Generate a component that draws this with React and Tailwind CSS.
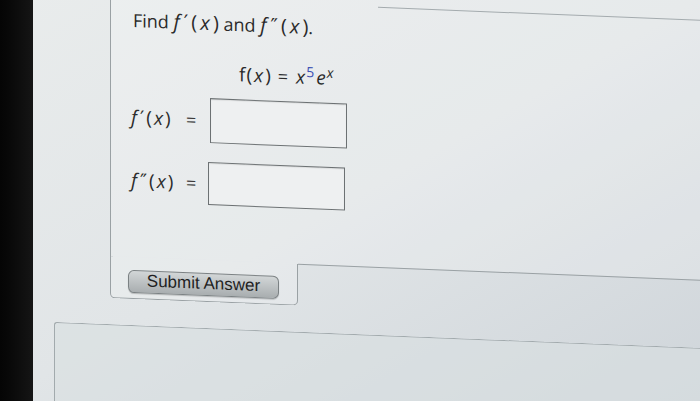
// Derivative question card (photo of a WebAssign-style page)
const sans = { fontFamily: '"Open Sans", "DejaVu Sans", sans-serif' }

// f′(x) / f″(x) typeset loosely, like the math renderer on the page
function Fx({ prime, wide = false }) {
  return (
    <span className={wide ? 'text-[20px]' : 'text-[19px]'}>
      <i>f</i>
      <span className={wide ? 'ml-[4px]' : 'ml-[3px]'} style={{ fontFamily: '"DejaVu Sans", sans-serif' }}>{prime}</span>
      <span className={wide ? 'ml-[3px]' : 'ml-[2px]'}>(</span>
      <i className={wide ? 'mx-[3px]' : 'mx-[2px]'}>x</i>
      <span>)</span>
    </span>
  )
}

function AnswerBox({ className = '' }) {
  return (
    <div className={`w-[137px] border border-[#6c7173] bg-[#eef0f1] shadow-[inset_0_1px_1px_rgba(0,0,0,0.08)] ${className}`} />
  )
}

function Row({ prime, boxClass, className = '' }) {
  return (
    <div className={`flex items-center ${className}`}>
      <span className="w-[75px] pl-[20px] text-[#2c2c2c] whitespace-nowrap">
        <Fx prime={prime} />
      </span>
      <span className="w-[24px] text-[18px] text-[#3a3a3a]">=</span>
      <AnswerBox className={boxClass} />
    </div>
  )
}

export default function App() {
  return (
    <div className="w-[700px] h-[401px] overflow-hidden flex bg-linear-to-br from-[#e9ecec] via-[#e1e5e7] to-[#cfd5da]">
      <div className="w-[33px] shrink-0 h-full bg-linear-to-r from-[#050505] to-[#151515]" />
      <div className="flex-1 -mt-[30px] skew-y-[2.3deg] origin-top-left" style={sans}>
        <div className="pl-[77px]">
          <div className="h-[283px] border-l border-[#9aa1a4] bg-white/20">
            <div className="h-[24px] flex">
              <div className="ml-[267px] flex-1 border-b border-[#a4abae]" />
            </div>
            <div className="mt-[9px] pl-[22px] h-[26px] leading-[26px] text-[18px] text-[#2a2a2a] whitespace-nowrap">
              Find <Fx prime="′" wide /> and <Fx prime="″" wide />.
            </div>
            <div className="mt-[24px] pl-[128px] h-[26px] leading-[26px] text-[19px] text-[#2a2a2a] whitespace-nowrap">
              <span>f</span>
              <span className="ml-[1px]">(</span>
              <i className="mx-[2px]">x</i>
              <span>)</span>
              <span className="ml-[7px] mr-[8px] text-[18px]">=</span>
              <i>x</i>
              <sup className="ml-[1px] text-[14px] text-[#3d52b4] not-italic">5</sup>
              <i className="ml-[2px]">e</i>
              <sup className="ml-[1px] text-[14px]"><i>x</i></sup>
            </div>
            <Row prime="′" boxClass="h-[45px]" className="mt-[12px]" />
            <Row prime="″" boxClass="h-[43px] -ml-[2px]" className="mt-[19px]" />
          </div>
          <div className="flex">
            <div className="w-[188px] h-[42px] border-l border-b border-r border-[#9aa1a4] rounded-b-[5px] bg-white/20 pt-[11px] pl-[17px]">
              <button
                className="w-[151px] h-[23px] rounded-[6px] border border-[#7b8183] bg-linear-to-b from-[#d2d6d7] to-[#a9aeb0] text-[17px] leading-[20px] text-[#1f1f1f] shadow-[0_1px_1px_rgba(0,0,0,0.2)]"
                style={{ fontFamily: '"Liberation Sans", Arial, sans-serif' }}
              >
                Submit Answer
              </button>
            </div>
            <div className="flex-1 border-t border-[#9aa1a4]" />
          </div>
        </div>
        <div className="mt-[26px] ml-[21px] h-[120px] border-t border-l border-[#a2aaad] rounded-tl-[3px] bg-[#d9dfe1]/60" />
      </div>
    </div>
  )
}
